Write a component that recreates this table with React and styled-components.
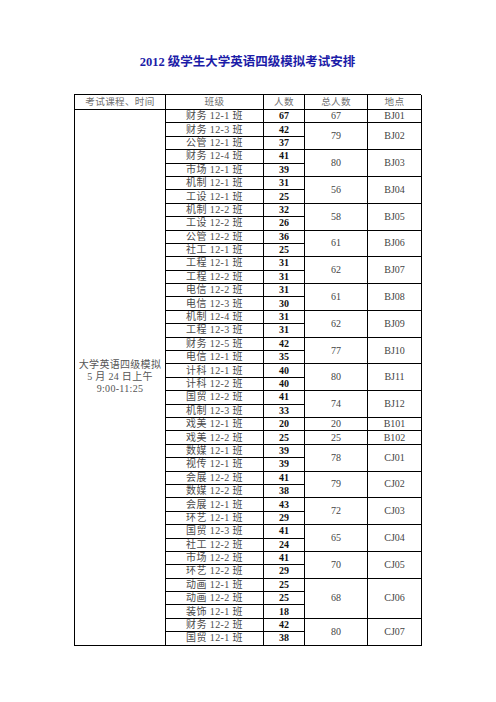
import React from 'react';
import styled, {createGlobalStyle} from 'styled-components';

const GROUPS = [
  {total: 67, room: 'BJ01', classes: [['财务 12-1 班', 67]]},
  {total: 79, room: 'BJ02', classes: [['财务 12-3 班', 42], ['公管 12-1 班', 37]]},
  {total: 80, room: 'BJ03', classes: [['财务 12-4 班', 41], ['市场 12-1 班', 39]]},
  {total: 56, room: 'BJ04', classes: [['机制 12-1 班', 31], ['工设 12-1 班', 25]]},
  {total: 58, room: 'BJ05', classes: [['机制 12-2 班', 32], ['工设 12-2 班', 26]]},
  {total: 61, room: 'BJ06', classes: [['公管 12-2 班', 36], ['社工 12-1 班', 25]]},
  {total: 62, room: 'BJ07', classes: [['工程 12-1 班', 31], ['工程 12-2 班', 31]]},
  {total: 61, room: 'BJ08', classes: [['电信 12-2 班', 31], ['电信 12-3 班', 30]]},
  {total: 62, room: 'BJ09', classes: [['机制 12-4 班', 31], ['工程 12-3 班', 31]]},
  {total: 77, room: 'BJ10', classes: [['财务 12-5 班', 42], ['电信 12-1 班', 35]]},
  {total: 80, room: 'BJ11', classes: [['计科 12-1 班', 40], ['计科 12-2 班', 40]]},
  {total: 74, room: 'BJ12', classes: [['国贸 12-2 班', 41], ['机制 12-3 班', 33]]},
  {total: 20, room: 'B101', classes: [['戏美 12-1 班', 20]]},
  {total: 25, room: 'B102', classes: [['戏美 12-2 班', 25]]},
  {total: 78, room: 'CJ01', classes: [['数媒 12-1 班', 39], ['视传 12-1 班', 39]]},
  {total: 79, room: 'CJ02', classes: [['会展 12-2 班', 41], ['数媒 12-2 班', 38]]},
  {total: 72, room: 'CJ03', classes: [['会展 12-1 班', 43], ['环艺 12-1 班', 29]]},
  {total: 65, room: 'CJ04', classes: [['国贸 12-3 班', 41], ['社工 12-2 班', 24]]},
  {total: 70, room: 'CJ05', classes: [['市场 12-2 班', 41], ['环艺 12-2 班', 29]]},
  {total: 68, room: 'CJ06', classes: [['动画 12-1 班', 25], ['动画 12-2 班', 25], ['装饰 12-1 班', 18]]},
  {total: 80, room: 'CJ07', classes: [['财务 12-2 班', 42], ['国贸 12-1 班', 38]]},
];

const ROW_COUNT = GROUPS.reduce((n, g) => n + g.classes.length, 0);

const GlobalStyle = createGlobalStyle`
  html, body {
    margin: 0;
    padding: 0;
    background: #fff;
  }
  body {
    font-family: "Liberation Serif", "Noto Sans CJK SC", serif;
  }
`;

export default function App() {
  const cells = [];
  let row = 2;

  GROUPS.forEach((group, gi) => {
    const start = row;
    group.classes.forEach(([name, count], ci) => {
      cells.push(
        <ClassCell key={`c${gi}-${ci}`} $row={row} $col={2}>
          {name}
        </ClassCell>,
      );
      cells.push(
        <CountCell key={`n${gi}-${ci}`} $row={row} $col={3}>
          {count}
        </CountCell>,
      );
      row += 1;
    });
    const span = group.classes.length;
    cells.push(
      <Cell key={`t${gi}`} $row={start} $span={span} $col={4}>
        {group.total}
      </Cell>,
    );
    cells.push(
      <Cell key={`r${gi}`} $row={start} $span={span} $col={5}>
        {group.room}
      </Cell>,
    );
  });

  return (
    <Page>
      <GlobalStyle />
      <Title>2012 级学生大学英语四级模拟考试安排</Title>
      <Sheet $rows={ROW_COUNT}>
        <HeadCell $row={1} $col={1}>考试课程、时间</HeadCell>
        <HeadCell $row={1} $col={2}>班级</HeadCell>
        <HeadCell $row={1} $col={3}>人数</HeadCell>
        <HeadCell $row={1} $col={4}>总人数</HeadCell>
        <HeadCell $row={1} $col={5}>地点</HeadCell>
        <CourseCell $row={2} $span={ROW_COUNT} $col={1}>
          <span>大学英语四级模拟</span>
          <span>5 月 24 日上午</span>
          <span>9:00-11:25</span>
        </CourseCell>
        {cells}
      </Sheet>
    </Page>
  );
}

const Page = styled.div`
  width: 496px;
  height: 702px;
  padding: 54px 0 0 74px;
  box-sizing: border-box;
  display: flex;
  flex-direction: column;
  align-items: flex-start;
`;

const Title = styled.h1`
  width: 347px;
  margin: 0 0 24px;
  text-align: center;
  font-size: 12.5px;
  line-height: 16px;
  font-weight: bold;
  color: #1c1ca8;
`;

const Sheet = styled.div`
  display: grid;
  grid-template-columns: 91px 98px 41px 63px 54px;
  grid-template-rows: 15px repeat(${p => p.$rows}, 13.4px);
  width: 347px;
  border-left: 1px solid #000;
  border-top: 1px solid #000;
  box-sizing: border-box;
`;

const Cell = styled.div`
  grid-row: ${p => p.$row} / span ${p => p.$span || 1};
  grid-column: ${p => p.$col};
  border-right: 1px solid #000;
  border-bottom: 1px solid #000;
  box-sizing: border-box;
  display: flex;
  align-items: center;
  justify-content: center;
  font-size: 10px;
  line-height: 12px;
  color: #444;
  white-space: nowrap;
  overflow: hidden;
`;

const HeadCell = styled(Cell)`
  color: #707070;
  font-size: 9.6px;
  letter-spacing: 0.3px;
`;

const ClassCell = styled(Cell)`
  color: #4a4a4a;
  letter-spacing: 0.4px;
`;

const CountCell = styled(Cell)`
  color: #111;
  font-weight: bold;
`;

const CourseCell = styled(Cell)`
  flex-direction: column;
  color: #555;
  line-height: 12px;
  letter-spacing: 0.3px;
`;
